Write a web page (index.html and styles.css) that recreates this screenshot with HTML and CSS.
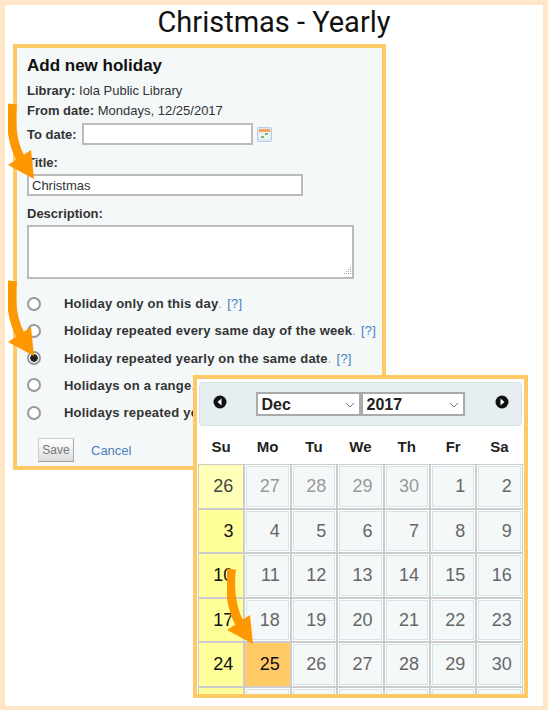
FILE: index.html
```html
<!DOCTYPE html>
<html lang="en">
<head>
    <meta charset="UTF-8">
    <meta name="viewport" content="width=device-width, initial-scale=1.0">
    <title>Christmas - Yearly</title>
    <link rel="stylesheet" href="styles.css">
</head>
<body>
    <div class="frame">
        <h1>Christmas - Yearly</h1>

        <form class="holidayForm">
            <h2>Add new holiday</h2>
            <p class="info"><b>Library:</b> Iola Public Library</p>
            <p class="info"><b>From date:</b> Mondays, 12/25/2017</p>
            <div class="toDate">
                <label for="toDate">To date:</label>
                <input type="text" id="toDate">
                <svg class="calIcon" width="15" height="15" viewBox="0 0 15 15">
                    <rect x="0.5" y="0.5" width="14" height="14" rx="1" fill="#dce8f4" stroke="#b5cde6"/>
                    <rect x="2" y="2" width="11" height="3" fill="#f5a55a"/>
                    <rect x="2" y="5" width="11" height="7" fill="#eef3f7"/>
                    <rect x="4" y="9" width="3" height="2" fill="#6cbf6c"/>
                    <rect x="8" y="6" width="3" height="2" fill="#6cbf6c"/>
                </svg>
            </div>
            <label class="field" for="title">Title:</label>
            <input type="text" id="title" class="titleInput" value="Christmas">
            <label class="field" for="description">Description:</label>
            <div class="descBox">
                <textarea id="description"></textarea>
                <svg class="grip" width="10" height="10" viewBox="0 0 10 10">
                    <path d="M8 0h1v1H8zM6 2h1v1H6zM8 2h1v1H8zM4 4h1v1H4zM6 4h1v1H6zM8 4h1v1H8zM2 6h1v1H2zM4 6h1v1H4zM6 6h1v1H6zM8 6h1v1H8z" fill="#aaa"/>
                </svg>
            </div>

            <ul class="options">
                <li><input type="radio" name="kind"><span>Holiday only on this day</span>. <a href="#">[?]</a></li>
                <li><input type="radio" name="kind"><span>Holiday repeated every same day of the week</span>. <a href="#">[?]</a></li>
                <li><input type="radio" name="kind" checked><span>Holiday repeated yearly on the same date</span>. <a href="#">[?]</a></li>
                <li><input type="radio" name="kind"><span>Holidays on a range</span>. <a href="#">[?]</a></li>
                <li><input type="radio" name="kind"><span>Holidays repeated yearly on a range</span>. <a href="#">[?]</a></li>
            </ul>

            <div class="actions">
                <button type="button">Save</button>
                <a href="#">Cancel</a>
            </div>
        </form>

        <div class="calendar">
            <div class="calHead">
                <svg class="navIcon prev" width="14" height="14" viewBox="0 0 14 14">
                    <circle cx="7" cy="7" r="6.5" fill="#111"/>
                    <path d="M8.5 3.5v7L4.5 7z" fill="#fff"/>
                </svg>
                <div class="selects">
                    <div class="selectBox month">
                        <select><option>Dec</option></select>
                        <svg class="chev" width="10" height="6" viewBox="0 0 10 6"><path d="M1 1l4 4 4-4" fill="none" stroke="#777" stroke-width="1"/></svg>
                    </div>
                    <div class="selectBox year">
                        <select><option>2017</option></select>
                        <svg class="chev" width="10" height="6" viewBox="0 0 10 6"><path d="M1 1l4 4 4-4" fill="none" stroke="#777" stroke-width="1"/></svg>
                    </div>
                </div>
                <svg class="navIcon next" width="14" height="14" viewBox="0 0 14 14">
                    <circle cx="7" cy="7" r="6.5" fill="#111"/>
                    <path d="M5.5 3.5v7L9.5 7z" fill="#fff"/>
                </svg>
            </div>
            <div class="weekdays">
                <span>Su</span><span>Mo</span><span>Tu</span><span>We</span><span>Th</span><span>Fr</span><span>Sa</span>
            </div>
            <div class="days">
                <div class="day sun pale">26</div><div class="day other">27</div><div class="day other">28</div><div class="day other">29</div><div class="day other">30</div><div class="day">1</div><div class="day">2</div>
                <div class="day sun">3</div><div class="day">4</div><div class="day">5</div><div class="day">6</div><div class="day">7</div><div class="day">8</div><div class="day">9</div>
                <div class="day sun">10</div><div class="day">11</div><div class="day">12</div><div class="day">13</div><div class="day">14</div><div class="day">15</div><div class="day">16</div>
                <div class="day sun">17</div><div class="day">18</div><div class="day">19</div><div class="day">20</div><div class="day">21</div><div class="day">22</div><div class="day">23</div>
                <div class="day sun">24</div><div class="day picked">25</div><div class="day">26</div><div class="day">27</div><div class="day">28</div><div class="day">29</div><div class="day">30</div>
                <div class="day sun"></div><div class="day"></div><div class="day"></div><div class="day"></div><div class="day"></div><div class="day"></div><div class="day"></div>
            </div>
        </div>

        <!-- orange arrows sit on top of the screenshots -->
        <svg class="arrow arrow1" width="30" height="80" viewBox="0 0 30 80"><path d="M4.5 1C2 22 4 40 13 56" fill="none" stroke="#ff9800" stroke-width="9"/><path d="M0 62L23 47L26 76z" fill="#ff9800"/></svg>
        <svg class="arrow arrow2" width="30" height="80" viewBox="0 0 30 80"><path d="M4.5 1C2 22 4 40 13 56" fill="none" stroke="#ff9800" stroke-width="9"/><path d="M0 62L23 47L26 76z" fill="#ff9800"/></svg>
        <svg class="arrow arrow3" width="30" height="80" viewBox="0 0 30 80"><path d="M4.5 1C2 22 4 40 13 56" fill="none" stroke="#ff9800" stroke-width="9"/><path d="M0 62L23 47L26 76z" fill="#ff9800"/></svg>
    </div>
</body>
</html>
```

FILE: styles.css
```css
* {
    box-sizing: border-box;
}
body {
    margin: 0;
    background: #fff;
    font-family: "Liberation Sans", Arial, sans-serif;
    color: #333;
}
.frame {
    position: relative;
    width: 548px;
    height: 710px;
    padding: 0 0 0 8px;
    border: solid #ffe6c7;
    border-width: 5px 5px 4px 5px;
    overflow: hidden;
}
h1 {
    margin: 0;
    height: 34px;
    font-family: Roboto, sans-serif;
    font-size: 29px;
    font-weight: 400;
    line-height: 34px;
    text-align: center;
    color: #111;
    padding-right: 8px;
}
.holidayForm {
    margin-top: 5px;
    width: 373px;
    height: 426px;
    padding: 9px 10px 8px;
    background: #f4f8f9;
    border: 4px solid #ffc966;
}
h2 {
    margin: 0 0 8px;
    font-size: 17px;
    line-height: 18px;
    color: #111;
}
.info {
    margin: 0 0 5px;
    font-size: 13px;
    line-height: 15px;
}
.toDate {
    display: flex;
    align-items: center;
    gap: 5px;
    height: 22px;
    font-size: 13px;
    font-weight: bold;
}
.toDate input {
    width: 171px;
    height: 22px;
}
.calIcon {
    margin-left: -1px;
}
input[type="text"], textarea {
    border: 2px solid #bbb;
    background: #fff;
    font-family: "Liberation Sans", Arial, sans-serif;
    font-size: 13px;
    color: #333;
    padding: 1px 3px;
}
.field {
    display: block;
    margin-top: 10px;
    font-size: 13px;
    font-weight: bold;
    line-height: 15px;
}
.titleInput {
    display: block;
    width: 276px;
    height: 22px;
    margin: 4px 0 0;
}
.descBox {
    position: relative;
    width: 327px;
    margin-top: 4px;
}
textarea {
    display: block;
    width: 327px;
    height: 54px;
    margin: 0;
    resize: none;
}
.grip {
    position: absolute;
    right: 2px;
    bottom: 2px;
}
.options {
    list-style: none;
    margin: 11px 0 0;
    padding: 0;
}
.options li {
    display: flex;
    align-items: center;
    height: 27.25px;
    font-size: 13px;
    letter-spacing: 0.2px;
    color: #999;
    white-space: nowrap;
}
.options input {
    appearance: none;
    flex: none;
    width: 14px;
    height: 14px;
    margin: 0 23px 0 0;
    background: #fff;
    border: 2px solid #999;
    border-radius: 50%;
}
.options input:checked {
    background: radial-gradient(circle, #222 0 3.5px, #fff 4px);
}
.options span {
    font-weight: bold;
    color: #333;
}
.options a {
    margin-left: 5px;
}
a {
    color: #4a7fbd;
    text-decoration: none;
}
.actions {
    display: flex;
    align-items: center;
    gap: 17px;
    margin: 12px 0 0 11px;
    font-size: 13px;
}
.actions button {
    width: 36px;
    height: 24px;
    padding: 0;
    font-family: "Liberation Sans", Arial, sans-serif;
    font-size: 12px;
    color: #777;
    background: linear-gradient(#fff, #ddd);
    border: 1px solid #ccc;
    border-right-color: #aaa;
    border-bottom-color: #999;
}
.calendar {
    position: absolute;
    left: 188px;
    top: 370px;
    width: 335px;
    height: 323px;
    padding: 3px 1px 0 1px;
    background: #fff;
    border: 4px solid #ffc966;
    overflow: hidden;
}
.calHead {
    display: flex;
    align-items: center;
    justify-content: space-between;
    height: 44px;
    margin: 0 1px;
    padding: 0 15px 0 14px;
    background: #e6eef1;
    border: 1px solid #d3e3e6;
    border-radius: 4px;
}
.navIcon {
    margin-top: -5px;
}
.prev {
    margin-left: -1px;
    margin-right: 1px;
}
.next {
    margin-left: 3px;
    margin-right: -3px;
}
.selects {
    display: flex;
}
.selectBox {
    position: relative;
    height: 24px;
}
.month {
    width: 105px;
}
.year {
    width: 104px;
}
select {
    appearance: none;
    display: block;
    width: 100%;
    height: 24px;
    margin: 0;
    padding: 0 4px;
    background: #fff;
    border: 2px solid #aaa;
    border-radius: 0;
    font-family: "Liberation Sans", Arial, sans-serif;
    font-size: 16px;
    font-weight: bold;
    color: #222;
}
.chev {
    position: absolute;
    right: 6px;
    top: 10px;
}
.weekdays {
    display: grid;
    grid-template-columns: repeat(7, 46.4px);
    height: 38px;
    padding-top: 2px;
    align-items: center;
    font-size: 15px;
    font-weight: bold;
    text-align: center;
    color: #222;
}
.days {
    display: grid;
    grid-template-columns: repeat(7, 46.4px);
    grid-auto-rows: 44.5px;
}
.day {
    padding: 0 10px 0 0;
    border: 1px solid #ccc;
    box-shadow: inset 0 0 0 1px #fff, inset 0 0 0 2px #d5e5e7;
    background: #f4f8f9;
    font-size: 18px;
    line-height: 42px;
    text-align: right;
    color: #666;
}
.other {
    color: #999;
}
.sun {
    background: #ffff99;
    color: #111;
    box-shadow: none;
}
.sun.pale {
    background: #ffffb8;
    color: #444;
}
.picked {
    background: #ffc966;
    color: #111;
    box-shadow: none;
}
.arrow {
    position: absolute;
}
.arrow1 {
    left: 3px;
    top: 98px;
}
.arrow2 {
    left: 3px;
    top: 275px;
}
.arrow3 {
    left: 222px;
    top: 563px;
}
```
